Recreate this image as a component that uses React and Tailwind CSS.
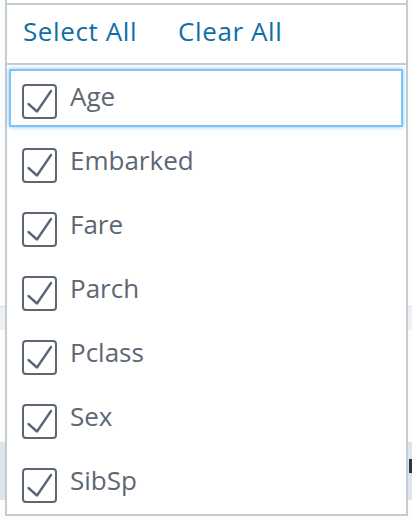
const fields = ["Age", "Embarked", "Fare", "Parch", "Pclass", "Sex", "SibSp"];

function CheckBox() {
  return (
    <span className="flex h-[35px] w-[35px] shrink-0 items-center justify-center rounded-[4px] border-2 border-[#5c6773] bg-white">
      <svg width="35" height="35" viewBox="0 0 35 35" fill="none" className="-m-[2px]">
        <path d="M6.5 20 L15 27.5 L29 7" stroke="#5c6773" strokeWidth="2.4" strokeLinecap="round" strokeLinejoin="round" />
      </svg>
    </span>
  );
}

export default function App() {
  return (
    <div className="relative h-[520px] w-[412px] overflow-hidden bg-[#fbfcfc] font-['Open_Sans',sans-serif]">
      {/* page content peeking out behind the dropdown */}
      <div className="h-[306px]" />
      <div className="h-[24px] border-t border-[#d9dde1] bg-[#edf0f2]" />
      <div className="h-[112px]" />
      <div className="relative h-[58px] bg-[#dfe4e8]">
        <span className="absolute right-0 top-[17px] h-[14px] w-[3px] bg-[#2c3742]" />
      </div>

      {/* field picker dropdown */}
      <div className="absolute left-[5px] top-0 flex h-[516px] w-[403px] flex-col border-x-2 border-b-2 border-[#c4cbd3] bg-white pt-[3px]">
        <div className="flex h-[62px] shrink-0 items-start gap-[41px] border-y-2 border-[#c4cbd3] pl-4 pt-[12px] text-[26px] leading-7 tracking-[0.6px] text-[#0f6ea8]">
          <button className="leading-7">Select All</button>
          <button className="leading-7">Clear All</button>
        </div>
        <ul>
          {fields.map((f, i) => (
            <li key={f} className="h-16 pb-[2px] pl-[2px] pr-[3px] pt-[4px]">
              <div
                className={
                  "flex h-full items-start gap-[13px] pl-[11px] " +
                  (i === 0 ? "border-2 border-[#7ec4f7] shadow-[0_0_4px_rgba(70,170,245,0.7)]" : "border-2 border-transparent")
                }
              >
                <span className="mt-[13px]">
                  <CheckBox />
                </span>
                <span className="mt-[9px] text-[26px] leading-8 text-[#5c6773]">{f}</span>
              </div>
            </li>
          ))}
        </ul>
      </div>
    </div>
  );
}
